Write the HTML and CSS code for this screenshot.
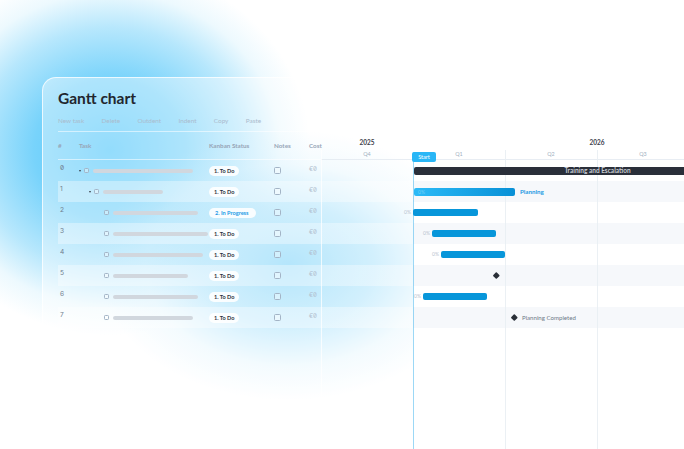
FILE: index.html
```html
<!DOCTYPE html>
<html>
<head>
<meta charset="utf-8">
<title>Gantt chart</title>
<link rel="stylesheet" href="styles.css">
</head>
<body>
<div class="card">
  <h1 class="title">Gantt chart</h1>
  <div class="toolbar">
    <span>New task</span><span>Delete</span><span>Outdent</span><span>Indent</span><span>Copy</span><span>Paste</span>
  </div>
  <div class="board">
    <div class="table">
      <div class="thead">
        <div class="c-num">#</div>
        <div class="c-task">Task</div>
        <div class="c-status">Kanban Status</div>
        <div class="c-notes">Notes</div>
        <div class="c-cost">Cost</div>
      </div>
      <div class="tbody">
        <div class="row">
          <div class="c-num num">0</div>
          <div class="c-task"><span class="slot"><span class="caret"></span></span><span class="cb"></span><span class="tbar" style="width:100px"></span></div>
          <div class="c-status"><span class="pill">1. To Do</span></div>
          <div class="c-notes"><span class="cb cb-n"></span></div>
          <div class="c-cost cost">€0</div>
        </div>
        <div class="row">
          <div class="c-num num">1</div>
          <div class="c-task l1"><span class="slot"><span class="caret"></span></span><span class="cb"></span><span class="tbar" style="width:60px"></span></div>
          <div class="c-status"><span class="pill">1. To Do</span></div>
          <div class="c-notes"><span class="cb cb-n"></span></div>
          <div class="c-cost cost">€0</div>
        </div>
        <div class="row">
          <div class="c-num num">2</div>
          <div class="c-task l2"><span class="slot"></span><span class="cb"></span><span class="tbar" style="width:85px"></span></div>
          <div class="c-status"><span class="pill pill-prog">2. In Progress</span></div>
          <div class="c-notes"><span class="cb cb-n"></span></div>
          <div class="c-cost cost">€0</div>
        </div>
        <div class="row">
          <div class="c-num num">3</div>
          <div class="c-task l2"><span class="slot"></span><span class="cb"></span><span class="tbar" style="width:95px"></span></div>
          <div class="c-status"><span class="pill">1. To Do</span></div>
          <div class="c-notes"><span class="cb cb-n"></span></div>
          <div class="c-cost cost">€0</div>
        </div>
        <div class="row">
          <div class="c-num num">4</div>
          <div class="c-task l2"><span class="slot"></span><span class="cb"></span><span class="tbar" style="width:90px"></span></div>
          <div class="c-status"><span class="pill">1. To Do</span></div>
          <div class="c-notes"><span class="cb cb-n"></span></div>
          <div class="c-cost cost">€0</div>
        </div>
        <div class="row">
          <div class="c-num num">5</div>
          <div class="c-task l2"><span class="slot"></span><span class="cb"></span><span class="tbar" style="width:75px"></span></div>
          <div class="c-status"><span class="pill">1. To Do</span></div>
          <div class="c-notes"><span class="cb cb-n"></span></div>
          <div class="c-cost cost">€0</div>
        </div>
        <div class="row">
          <div class="c-num num">6</div>
          <div class="c-task l2"><span class="slot"></span><span class="cb"></span><span class="tbar" style="width:85px"></span></div>
          <div class="c-status"><span class="pill">1. To Do</span></div>
          <div class="c-notes"><span class="cb cb-n"></span></div>
          <div class="c-cost cost">€0</div>
        </div>
        <div class="row">
          <div class="c-num num">7</div>
          <div class="c-task l2"><span class="slot"></span><span class="cb"></span><span class="tbar" style="width:80px"></span></div>
          <div class="c-status"><span class="pill">1. To Do</span></div>
          <div class="c-notes"><span class="cb cb-n"></span></div>
          <div class="c-cost cost">€0</div>
        </div>
      </div>
    </div>

    <div class="gantt">
      <div class="g-head">
        <div class="g-years"><div class="y-q1">2025</div><div class="y-q4">2026</div></div>
        <div class="g-quarters"><div>Q4</div><div>Q1</div><div>Q2</div><div>Q3</div></div>
      </div>
      <div class="g-body">
        <div class="g-row"><div class="gbar gbar-dark" style="left:93px;width:367px">Training and Escalation</div></div>
        <div class="g-row"><div class="gbar gbar-grad" style="left:93px;width:101px"><span class="pct-in">0%</span></div><span class="g-label g-label-blue" style="left:199px">Planning</span></div>
        <div class="g-row"><div class="gbar" style="left:92px;width:65px"><span class="pct">0%</span></div></div>
        <div class="g-row"><div class="gbar" style="left:111px;width:64px"><span class="pct">0%</span></div></div>
        <div class="g-row"><div class="gbar" style="left:120px;width:64px"><span class="pct">0%</span></div></div>
        <div class="g-row"><span class="diamond" style="left:172.5px"></span></div>
        <div class="g-row"><div class="gbar" style="left:102px;width:64px"><span class="pct">0%</span></div></div>
        <div class="g-row"><span class="diamond" style="left:190.5px"></span><span class="g-label g-label-grey" style="left:201px">Planning Completed</span></div>
      </div>
      <div class="g-lines">
        <span class="vl vl-sep" style="left:0"></span>
        <span class="vl vl-today" style="left:92px"></span>
        <span class="vl" style="left:184px"></span>
        <span class="vl" style="left:276px"></span>
        <span class="vl" style="left:368px"></span>
      </div>
      <span class="start">Start</span>
    </div>
  </div>
</div>
</body>
</html>
```
FILE: styles.css
```css
* { box-sizing: border-box; margin: 0; padding: 0; }

html, body { width: 684px; height: 449px; overflow: hidden; }

body {
  font-family: Lato, "Open Sans", sans-serif;
  padding: 77px 0 0 42px;
  background:
    radial-gradient(ellipse 190px 135px at 288px 265px, rgba(124, 211, 250, 0.95) 0%, rgba(130, 213, 250, 0.6) 45%, rgba(180, 230, 252, 0.25) 75%, rgba(255, 255, 255, 0) 100%),
    radial-gradient(ellipse 200px 185px at 110px 150px, #4cc5fa 0%, #78d3fb 38%, rgba(170, 227, 252, 0.85) 66%, rgba(215, 242, 253, 0.45) 85%, rgba(255, 255, 255, 0) 100%),
    #ffffff;
}

.card {
  width: 700px;
  height: 420px;
  display: flex;
  flex-direction: column;
  border-radius: 14px 0 0 0;
  background: rgba(255, 255, 255, 0.4);
  border-top: 1px solid rgba(255, 255, 255, 0.75);
  border-left: 1px solid rgba(255, 255, 255, 0.75);
  padding: 10px 0 0 15px;
}

.title {
  font-size: 15.5px;
  line-height: 20px;
  font-weight: 700;
  color: #22262e;
}

.toolbar {
  display: flex;
  gap: 17.3px;
  margin-top: 7px;
  height: 17px;
  flex: none;
  line-height: 12px;
  padding-bottom: 4px;
  font-size: 6.4px;
  color: #aabbcd;
  border-bottom: 1px solid rgba(255, 255, 255, 0.55);
}

.board { display: flex; flex: 1; }

.table { width: 263px; flex: none; }

.thead {
  display: flex;
  align-items: center;
  height: 28px;
  font-size: 6.3px;
  font-weight: 700;
  color: #97a5b7;
  border-bottom: 1px solid rgba(255, 255, 255, 0.55);
}

.c-num { width: 20px; flex: none; }
.c-task { width: 131px; flex: none; display: flex; align-items: center; padding-left: 1px; }
.c-task.l1 { padding-left: 11px; }
.c-task.l2 { padding-left: 21px; }
.c-status { width: 65px; flex: none; display: flex; align-items: center; }
.c-notes { width: 35px; flex: none; display: flex; align-items: center; }
.c-cost { width: 12px; flex: none; }

.row { display: flex; align-items: center; height: 21px; }
.tbody .row:nth-child(even) { background: rgba(255, 255, 255, 0.35); }

.num {
  align-self: flex-start;
  padding: 4px 0 0 2px;
  line-height: 8px;
  font-family: Inter, Lato, sans-serif;
  font-feature-settings: "zero" 1;
  font-size: 6.6px;
  color: #6f7d8e;
}

.cost {
  align-self: flex-start;
  padding-top: 4.5px;
  line-height: 8px;
  font-family: Inter, Lato, sans-serif;
  font-feature-settings: "zero" 1;
  font-size: 6.2px;
  color: #b2c0cf;
}

.slot { width: 4.5px; height: 5px; flex: none; display: flex; align-items: center; }
.caret {
  width: 0; height: 0;
  border-left: 1.3px solid transparent;
  border-right: 1.3px solid transparent;
  border-top: 2.2px solid #3a3f48;
}

.cb {
  width: 5.5px; height: 5.5px; flex: none;
  border: 0.8px solid #a3b4c6;
  border-radius: 1.3px;
  background: rgba(255, 255, 255, 0.35);
}
.cb-n { width: 6.5px; height: 6.5px; border-radius: 1.5px; }

.tbar {
  height: 4px; flex: none;
  margin-left: 3.8px;
  border-radius: 2px;
  background: #d1d7de;
}

.pill {
  height: 10px;
  line-height: 10px;
  padding: 0 5px;
  border-radius: 5px;
  background: rgba(255, 255, 255, 0.88);
  font-size: 5.6px;
  font-weight: 700;
  color: #2c323c;
}
.pill-prog { color: #1d9be6; padding: 0 7px 0 6px; }

/* Gantt */
.gantt {
  flex: 1;
  min-width: 0;
  position: relative;
  overflow: hidden;
  background: linear-gradient(to right, rgba(255, 255, 255, 0) 92px, #ffffff 92px);
}

.g-head { height: 28px; border-bottom: 1px solid rgba(226, 233, 240, 0.8); }

.g-years { display: flex; height: 18px; padding-top: 4px; line-height: 14px; font-size: 6.5px; font-weight: 700; color: #3b414c; }
.y-q1 { width: 92px; flex: none; text-align: center; }
.y-q4 { width: 368px; flex: none; text-align: center; }

.g-quarters { display: flex; height: 9px; line-height: 9px; font-size: 5.4px; color: #9fb0c1; }
.g-quarters div { width: 92px; flex: none; text-align: center; }

.g-row { position: relative; height: 21px; }
.g-row:nth-child(even) { background: linear-gradient(to right, rgba(255, 255, 255, 0.35) 92px, #f6f8fb 92px); }

.gbar {
  position: absolute;
  z-index: 2;
  top: 7px;
  height: 6.5px;
  border-radius: 2px;
  background: #0796da;
}
.gbar-dark {
  top: 6.5px;
  height: 8px;
  background: #2a2f3a;
  color: #c6cbd3;
  font-size: 6.5px;
  font-weight: 700;
  line-height: 8px;
  text-align: center;
  white-space: nowrap;
}
.gbar-grad {
  top: 6.5px;
  height: 8px;
  background: linear-gradient(to right, #2bbaf7, #0890d6);
}
.pct-in {
  position: absolute; left: 4px; top: 0;
  line-height: 8px; font-size: 5px;
  color: rgba(255, 255, 255, 0.35);
}
.pct {
  position: absolute; right: 100%; top: 0;
  margin-right: 2px;
  line-height: 6.5px; font-size: 5px;
  color: #b7c2ce;
}

.g-label { position: absolute; z-index: 2; top: 0; line-height: 21px; white-space: nowrap; }
.g-label-blue { font-size: 6.2px; font-weight: 700; color: #1c9ae3; }
.g-label-grey { font-size: 6.1px; color: #6e7a88; }

.diamond {
  position: absolute;
  z-index: 2;
  top: 8.2px;
  width: 4.6px; height: 4.6px;
  background: #2a2f38;
  border-radius: 0.8px;
  transform: rotate(45deg);
}

.g-lines { position: absolute; z-index: 1; top: 18px; bottom: 0; left: 0; right: 0; pointer-events: none; }
.vl { position: absolute; top: 0; bottom: 0; width: 1px; background: rgba(233, 238, 243, 0.9); }
.vl-sep { background: rgba(255, 255, 255, 0.75); }
.vl-today { background: rgba(90, 190, 240, 0.6); top: 2px; }

.start {
  position: absolute;
  z-index: 3;
  left: 91px; top: 20px;
  width: 24px; height: 10px;
  line-height: 10px;
  border-radius: 2px;
  background: #29b6f6;
  color: #ffffff;
  font-size: 5.6px;
  text-align: center;
}
```
